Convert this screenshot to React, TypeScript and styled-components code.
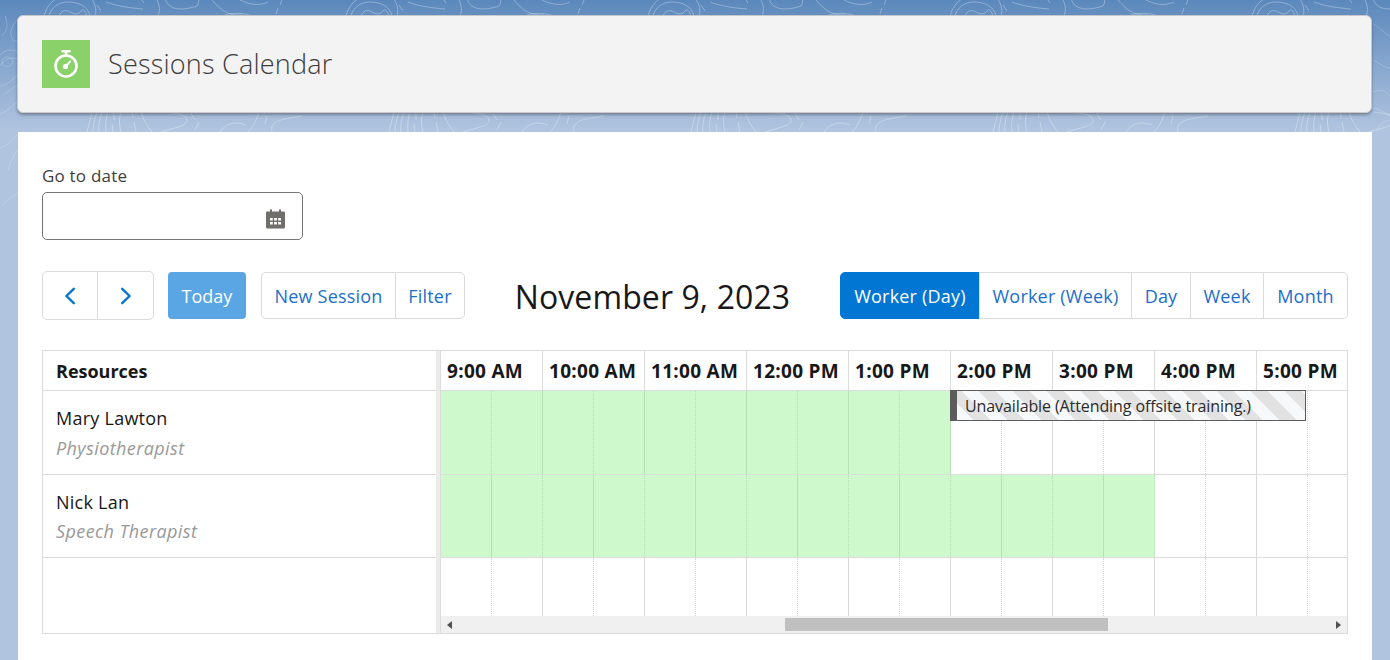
import React from "react";
import styled, { createGlobalStyle } from "styled-components";

const Global = createGlobalStyle`
  html, body { margin: 0; padding: 0; height: 100%; overflow: hidden; }
  body { font-family: "Open Sans", "Noto Sans", sans-serif; color: #181818; background: #b0c4df; }
  * { box-sizing: border-box; }
`;

const Page = styled.div`
  position: relative;
  width: 1390px;
  height: 660px;
  padding: 15px 18px 0 17px;
  overflow: hidden;
  background: linear-gradient(180deg, #5b88bc 0px, #8aa9cf 70px, #b0c4df 130px, #b0c4df 100%);
`;

const Topo = styled.svg`
  position: absolute;
  inset: 0;
  width: 1390px;
  height: 660px;
  pointer-events: none;
`;

const Header = styled.header`
  position: relative;
  height: 98px;
  display: flex;
  align-items: center;
  gap: 18px;
  padding: 0 24px;
  background: #f3f3f3;
  border: 1px solid #c9c9c9;
  border-radius: 6px;
  box-shadow: 0 2px 3px rgba(0, 0, 0, 0.3);
`;

const IconTile = styled.div`
  width: 48px;
  height: 48px;
  background: #8bd16a;
  display: flex;
  align-items: center;
  justify-content: center;
`;

const Title = styled.h1`
  margin: 0;
  padding-bottom: 2px;
  font-size: 27px;
  font-weight: 300;
  color: #3c3c3c;
  letter-spacing: 0.2px;
`;

const Card = styled.main`
  position: relative;
  margin: 19px 0 0 1px;
  height: 528px;
  padding: 33px 24px 0;
  background: #fff;
`;

const FieldLabel = styled.label`
  display: block;
  font-size: 17px;
  line-height: 22px;
  letter-spacing: 0.2px;
  color: #3e3e3c;
`;

const DateBox = styled.div`
  width: 261px;
  height: 48px;
  margin-top: 5px;
  padding: 6px 17px 0 0;
  display: flex;
  align-items: center;
  justify-content: flex-end;
  border: 1px solid #747474;
  border-radius: 5px;
`;

const Toolbar = styled.div`
  display: flex;
  align-items: center;
  height: 50px;
  margin-top: 30px;
`;

const Group = styled.div<{ $ml?: number; $h?: number }>`
  display: flex;
  height: ${(p) => p.$h ?? 47}px;
  margin-left: ${(p) => p.$ml ?? 0}px;
`;

const GroupBtn = styled.button<{ $w: number; $active?: boolean }>`
  width: ${(p) => p.$w}px;
  padding: 2px 0 0;
  margin-left: -1px;
  border: 1px solid ${(p) => (p.$active ? "#0176d3" : "#dddbda")};
  background: ${(p) => (p.$active ? "#0176d3" : "#fff")};
  color: ${(p) => (p.$active ? "#fff" : "#1b6fc9")};
  font: 400 18px/24px "Open Sans", sans-serif;
  letter-spacing: 0.2px;
  white-space: nowrap;
  display: flex;
  align-items: center;
  justify-content: center;
  &:first-child { margin-left: 0; border-radius: 5px 0 0 5px; }
  &:last-child { border-radius: 0 5px 5px 0; }
`;

const TodayBtn = styled.button`
  width: 78px;
  height: 47px;
  margin-left: 14px;
  padding: 2px 0 0;
  border: 0;
  border-radius: 4px;
  background: #5aa6e4;
  color: #fff;
  font: 400 18px/24px "Open Sans", sans-serif;
`;

const DateHeading = styled.h2`
  flex: 1;
  margin: 0;
  padding: 3px 0 0 0;
  text-align: center;
  font-size: 32px;
  font-weight: 400;
  color: #181818;
  letter-spacing: 0.1px;
`;

const Scheduler = styled.section`
  display: flex;
  width: 1306px;
  height: 284px;
  margin-top: 30px;
  border: 1px solid #dcdcdc;
`;

const Resources = styled.div`
  width: 393px;
  flex: none;
  display: flex;
  flex-direction: column;
`;

const ResHead = styled.div`
  height: 40px;
  padding-left: 13px;
  display: flex;
  align-items: center;
  font-size: 18px;
  font-weight: 700;
  border-bottom: 1px solid #dcdcdc;
`;

const ResRow = styled.div<{ $h: number }>`
  height: ${(p) => p.$h}px;
  padding: 13px 13px 0;
  border-bottom: 1px solid #dcdcdc;
`;

const ResName = styled.div`
  font-size: 18px;
  line-height: 28px;
  letter-spacing: 0.25px;
  color: #181818;
`;

const ResRole = styled.div<{ $mt: number }>`
  font-size: 18px;
  line-height: 28px;
  margin-top: ${(p) => p.$mt}px;
  font-style: italic;
  font-weight: 400;
  letter-spacing: 0.4px;
  color: #999999;
`;

const Splitter = styled.div`
  width: 5px;
  flex: none;
  background: #ebebeb;
  border-right: 1px solid #dcdcdc;
`;

const Timeline = styled.div`
  position: relative;
  flex: 1;
  min-width: 0;
  display: flex;
  flex-direction: column;
  overflow: hidden;
`;

const HourRow = styled.div`
  display: flex;
  height: 40px;
  flex: none;
  border-bottom: 1px solid #dcdcdc;
`;

const HourCell = styled.div`
  width: 102px;
  flex: none;
  padding-left: 6px;
  display: flex;
  align-items: center;
  font-size: 19px;
  font-weight: 700;
  letter-spacing: 0.3px;
  white-space: nowrap;
  border-right: 1px solid #dcdcdc;
`;

const SlotRow = styled.div<{ $h: number; $last?: boolean }>`
  position: relative;
  display: flex;
  flex: none;
  height: ${(p) => p.$h}px;
  border-bottom: ${(p) => (p.$last ? "0" : "1px solid #dcdcdc")};
`;

const Slot = styled.div<{ $solid: boolean; $green: boolean }>`
  width: 51px;
  flex: none;
  background: ${(p) => (p.$green ? "#cef9cc" : "transparent")};
  border-right: 1px ${(p) => (p.$solid ? "solid" : "dotted")} ${(p) => (p.$green ? "#b8dfb6" : "#d8d8d8")};
`;

const EventBar = styled.div`
  position: absolute;
  left: 509px;
  top: -1px;
  width: 356px;
  height: 31px;
  padding-left: 8px;
  display: flex;
  align-items: center;
  font-size: 16px;
  letter-spacing: -0.1px;
  color: #2b2b2b;
  white-space: nowrap;
  border: 1px solid #5c5c5c;
  border-left: 7px solid #5c5c5c;
  background: repeating-linear-gradient(45deg, #f7f8fa 0, #f7f8fa 12px, #e2e2e2 12px, #e2e2e2 24px);
`;

const ScrollTrack = styled.div`
  position: relative;
  height: 17px;
  flex: none;
  background: #f0f0f0;
`;

const ScrollThumb = styled.div`
  position: absolute;
  left: 344px;
  top: 2px;
  width: 323px;
  height: 13px;
  background: #c0c0c0;
`;

const ArrowLeft = styled.div`
  position: absolute;
  left: 6px;
  top: 5px;
  width: 0;
  height: 0;
  border: 4px solid transparent;
  border-left: 0;
  border-right: 5px solid #505050;
`;

const ArrowRight = styled.div`
  position: absolute;
  right: 6px;
  top: 5px;
  width: 0;
  height: 0;
  border: 4px solid transparent;
  border-right: 0;
  border-left: 5px solid #505050;
`;

const Stopwatch = () => (
  <svg width="26" height="30" viewBox="0 0 26 30" fill="none" stroke="#fff">
    <circle cx="13" cy="17" r="10.5" strokeWidth="2.6" />
    <path d="M13 6V3" strokeWidth="2.6" />
    <path d="M9.5 2.2h7" strokeWidth="2.4" strokeLinecap="round" />
    <circle cx="12.5" cy="17.5" r="2.6" fill="#fff" stroke="none" />
    <path d="M13 17l4.2-4.6" strokeWidth="2" strokeLinecap="round" />
  </svg>
);

const CalendarIcon = () => (
  <svg width="19" height="20" viewBox="0 0 19 20">
    <path
      fill="#706e6b"
      fillRule="evenodd"
      d="M1.2 2.5H4V1a.7.7 0 0 1 .7-.7h.6A.7.7 0 0 1 6 1v1.5h7V1a.7.7 0 0 1 .7-.7h.6A.7.7 0 0 1 15 1v1.5h2.8A1.2 1.2 0 0 1 19 3.7V18a1.6 1.6 0 0 1-1.6 1.6H1.6A1.6 1.6 0 0 1 0 18V3.7a1.2 1.2 0 0 1 1.2-1.2zM4 9v2.4h2.8V9zm4.1 0v2.4h2.8V9zm4.1 0v2.4H15V9zM4 13v2.4h2.8V13zm4.1 0v2.4h2.8V13zm4.1 0v2.4H15V13z"
    />
  </svg>
);

const Chevron = ({ right }: { right?: boolean }) => (
  <svg width="12" height="18" viewBox="0 0 12 18" fill="none" stroke="#0176d3" strokeWidth="2.4" strokeLinecap="round" strokeLinejoin="round">
    <path d={right ? "M2.2 1.8 9.6 9l-7.4 7.2" : "M9.8 1.8 2.4 9l7.4 7.2"} />
  </svg>
);

const tile = [
  "M44 16C47 5 54 -2 62 -3",
  "M49 16C51 8 58 2 68 2s20 4 22 14",
  "M59 16c2-5 6-7 11-4s9 2 11-1s5 1 6 5",
  "M91 -2c4 5 6 12 4 18",
  "M97 5l4 6",
  "M106 2c10 4 24 6 37 7",
  "M142 0l2 3",
  "M157 0c3 6 3 11 1 16",
  "M165 -2c3 14 20 12 32 8c2-3 2-5 1-8",
  "M212 0c7 8 14 16 30 15",
  "M222 16c10-4 22-3 30 0",
  "M240 0c10 5 20 6 28 2",
  "M276 14l2-6M280 5l2-5",
  "M306 0c-3 6-4 12-3 16",
  "M87 132l5-20",
  "M93 132c0-8 2-14 4-20",
  "M99 132c-1-7 1-14 3-20",
  "M106 132c-1-7 0-14 2-20",
  "M113 132l-1-8M114 120v-8",
  "M121 132c-2-7-2-14 0-20",
  "M132 112l1 6M134 122l2 10",
  "M141 112c2 7 6 14 11 20",
  "M166 112c12 2 20 2 21 8s-14 8-26 12",
  "M190 112l5 8",
  "M199 122l-4 8",
  "M220 132c6-9 15-11 26-7",
  "M248 132c6-6 9-14 11-20",
  "M265 124l2-8",
  "M272 132c-2-8 4-12 18-14s22-6 26-2",
];

const edges = [
  "M5 16c3 6 3 14-3 20",
  "M17 20c-5 6-8 12-5 18c1 3 3 4 6 3",
  "M0 55c6-6 12-6 18-3",
  "M0 66c5-8 12-9 18-7",
  "M2 62c0-5 6-6 9-4s2 7-2 8s-7-1-7-4z",
  "M0 86c8-2 13-6 18-12",
  "M4 94c6-3 10-7 14-10",
  "M0 114c7-2 13-10 18-12",
  "M0 148c4-1 11-6 18-14",
  "M8 170c3-10 6-16 10-20",
  "M3 205c5-6 10-9 15-12",
  "M1373 24c8 4 12 10 17 12",
  "M1373 60c6 3 12 8 17 8",
  "M1373 92c5-2 11-3 17 4",
  "M1373 108c6 0 12 6 17 8",
  "M1377 130c3-7 8-10 13-10",
];

const hours = ["9:00 AM", "10:00 AM", "11:00 AM", "12:00 PM", "1:00 PM", "2:00 PM", "3:00 PM", "4:00 PM", "5:00 PM"];
const slotIndexes = Array.from({ length: 18 }, (_, i) => i);

const Slots = ({ green, flip }: { green: number; flip?: boolean }) => (
  <>
    {slotIndexes.map((i) => (
      <Slot key={i} $green={i < green} $solid={flip && i < green ? i % 2 === 0 : i % 2 === 1} />
    ))}
  </>
);

export default function App() {
  return (
    <Page>
      <Global />
      <Topo viewBox="0 0 1390 660" fill="none" stroke="#fff" strokeOpacity="0.2" strokeWidth="1">
        <defs>
          <pattern id="topo" x="0" y="0" width="302" height="660" patternUnits="userSpaceOnUse">
            {tile.map((d) => (
              <path key={d} d={d} fill="none" stroke="#fff" strokeWidth="1" strokeOpacity="0.3" />
            ))}
          </pattern>
        </defs>
        <rect x="0" y="0" width="1390" height="140" fill="url(#topo)" stroke="none" />
        {edges.map((d) => (
          <path key={d} d={d} />
        ))}
      </Topo>
      <Header>
        <IconTile>
          <Stopwatch />
        </IconTile>
        <Title>Sessions Calendar</Title>
      </Header>
      <Card>
        <FieldLabel>Go to date</FieldLabel>
        <DateBox>
          <CalendarIcon />
        </DateBox>
        <Toolbar>
          <Group $h={49}>
            <GroupBtn $w={56} aria-label="Previous">
              <Chevron />
            </GroupBtn>
            <GroupBtn $w={57} aria-label="Next">
              <Chevron right />
            </GroupBtn>
          </Group>
          <TodayBtn>Today</TodayBtn>
          <Group $ml={15}>
            <GroupBtn $w={135}>New Session</GroupBtn>
            <GroupBtn $w={70}>Filter</GroupBtn>
          </Group>
          <DateHeading>November 9, 2023</DateHeading>
          <Group>
            <GroupBtn $w={140} $active>Worker (Day)</GroupBtn>
            <GroupBtn $w={153}>Worker (Week)</GroupBtn>
            <GroupBtn $w={60}>Day</GroupBtn>
            <GroupBtn $w={74}>Week</GroupBtn>
            <GroupBtn $w={85}>Month</GroupBtn>
          </Group>
        </Toolbar>
        <Scheduler>
          <Resources>
            <ResHead>Resources</ResHead>
            <ResRow $h={84}>
              <ResName>Mary Lawton</ResName>
              <ResRole $mt={2}>Physiotherapist</ResRole>
            </ResRow>
            <ResRow $h={83}>
              <ResName>Nick Lan</ResName>
              <ResRole $mt={1}>Speech Therapist</ResRole>
            </ResRow>
          </Resources>
          <Splitter />
          <Timeline>
            <HourRow>
              {hours.map((h) => (
                <HourCell key={h}>{h}</HourCell>
              ))}
            </HourRow>
            <SlotRow $h={84}>
              <Slots green={10} />
              <EventBar>Unavailable (Attending offsite training.)</EventBar>
            </SlotRow>
            <SlotRow $h={83}>
              <Slots green={14} flip />
            </SlotRow>
            <SlotRow $h={58} $last>
              <Slots green={0} />
            </SlotRow>
            <ScrollTrack>
              <ArrowLeft />
              <ScrollThumb />
              <ArrowRight />
            </ScrollTrack>
          </Timeline>
        </Scheduler>
      </Card>
    </Page>
  );
}
